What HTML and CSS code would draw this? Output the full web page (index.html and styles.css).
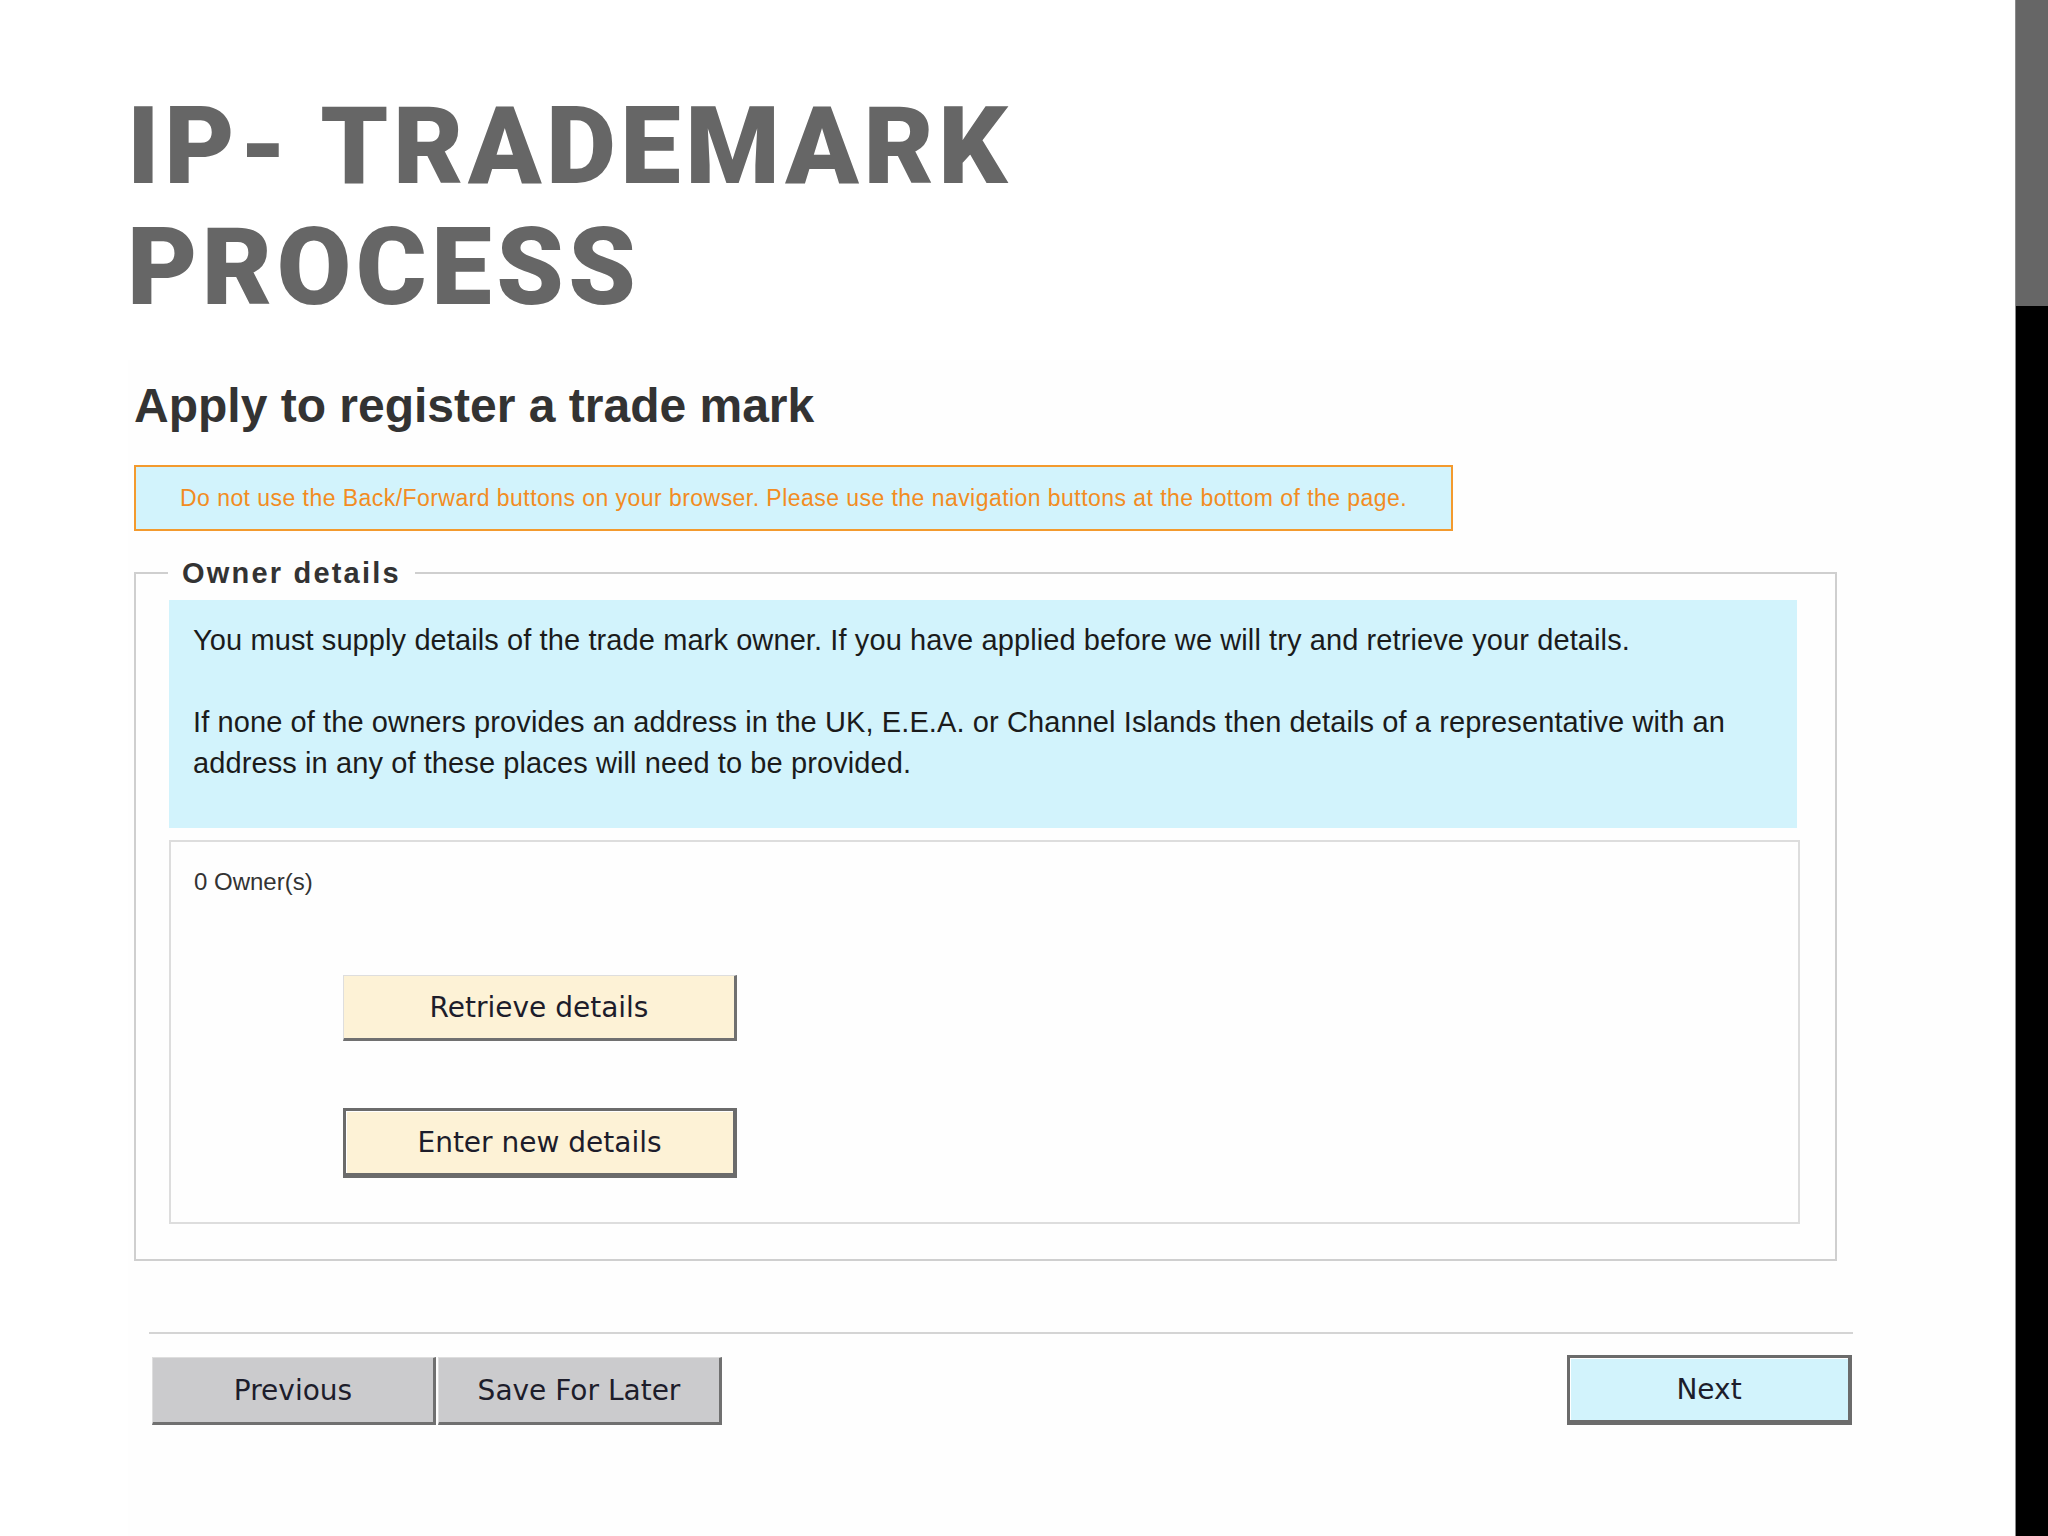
FILE: index.html
```html
<!DOCTYPE html>
<html lang="en">
<head>
<meta charset="utf-8">
<title>IP- Trademark Process</title>
<link rel="stylesheet" href="styles.css">
</head>
<body>
<div class="page">
  <main class="slide">
    <h1 class="title">IP- TRADEMARK<br>PROCESS</h1>
    <section class="shot">
      <h2 class="heading">Apply to register a trade mark</h2>
      <div class="notice">Do not use the Back/Forward buttons on your browser. Please use the navigation buttons at the bottom of the page.</div>
      <fieldset class="owner">
        <legend class="owner-legend">Owner details</legend>
        <div class="info">
          <p>You must supply details of the trade mark owner. If you have applied before we will try and retrieve your details.</p>
          <p>If none of the owners provides an address in the UK, E.E.A. or Channel Islands then details of a representative with an address in any of these places will need to be provided.</p>
        </div>
        <div class="owners">
          <div class="owners-count">0 Owner(s)</div>
          <div class="owner-actions">
            <button class="btn btn-cream btn-raised" type="button">Retrieve details</button>
            <button class="btn btn-cream btn-focus btn-tall" type="button">Enter new details</button>
          </div>
        </div>
      </fieldset>
      <div class="rule"></div>
      <div class="nav">
        <div class="nav-left">
          <button class="btn btn-grey btn-raised btn-nav" type="button">Previous</button>
          <button class="btn btn-grey btn-raised btn-nav" type="button">Save For Later</button>
        </div>
        <button class="btn btn-next btn-focus btn-tall" type="button">Next</button>
      </div>
    </section>
  </main>
  <aside class="edge">
    <div class="edge-top"></div>
    <div class="edge-bottom"></div>
  </aside>
</div>
</body>
</html>
```

FILE: styles.css
```css
html, body {
  margin: 0;
  padding: 0;
}

body {
  background: #ffffff;
  font-family: "Liberation Sans", Arial, sans-serif;
  overflow: hidden;
}

.page {
  display: flex;
  width: 2048px;
  height: 1536px;
}

.slide {
  flex: 1;
  min-width: 0;
  display: flex;
  flex-direction: column;
  padding-left: 127px;
}

.title {
  margin: 86px 0 0;
  font-family: Roboto, "Liberation Sans", Arial, sans-serif;
  font-size: 108px;
  line-height: 121px;
  font-weight: 900;
  color: #666666;
  letter-spacing: 4.5px;
}

.shot {
  flex: 1;
  margin: 32px 25px 0 1px;
  padding: 18px 0 0 6px;
  background: #fefefe;
}

.heading {
  margin: 0;
  font-size: 48px;
  line-height: 56px;
  font-weight: 700;
  color: #333333;
}

.notice {
  margin-top: 31px;
  width: 1319px;
  height: 66px;
  box-sizing: border-box;
  border: 2px solid #f39a2e;
  background: #d2f3fc;
  color: #f28c22;
  font-size: 23px;
  line-height: 62px;
  letter-spacing: 0.45px;
  padding-left: 44px;
  white-space: nowrap;
}

.owner {
  margin: 26px 0 0;
  width: 1703px;
  min-width: 0;
  box-sizing: border-box;
  border: 2px solid #cfcfcf;
  padding: 0 37px 35px 32px;
}

.owner-legend {
  padding: 0 14px;
  font-size: 29px;
  line-height: 32px;
  font-weight: 700;
  color: #333333;
  letter-spacing: 2.2px;
}

.info {
  margin: 11px 0 0 1px;
  width: 1628px;
  box-sizing: border-box;
  padding: 20px 24px 44px;
  background: #d2f3fc;
  font-size: 29px;
  line-height: 41px;
  letter-spacing: 0.1px;
  color: #1b1b1b;
}

.info p {
  margin: 0;
}

.info p + p {
  margin-top: 41px;
}

.owners {
  margin: 12px 0 0 1px;
  width: 1631px;
  height: 384px;
  box-sizing: border-box;
  border: 2px solid #dddddd;
  padding: 26px 0 0 23px;
}

.owners-count {
  font-size: 24px;
  line-height: 28px;
  color: #333333;
}

.owner-actions {
  display: flex;
  flex-direction: column;
  align-items: flex-start;
  gap: 67px;
  margin: 79px 0 0 149px;
}

.btn {
  appearance: none;
  -webkit-appearance: none;
  margin: 0;
  padding: 0;
  width: 394px;
  height: 66px;
  box-sizing: border-box;
  display: flex;
  align-items: center;
  justify-content: center;
  font-family: "DejaVu Sans", Verdana, sans-serif;
  font-size: 28px;
  color: #1d1d2b;
  border-radius: 0;
  cursor: pointer;
}

.btn-cream {
  background: #fdf2d6;
}

.btn-grey {
  background: #cbcbcd;
}

.btn-next {
  background: #d2f3fc;
  width: 285px;
}

.btn-raised {
  border-style: solid;
  border-color: #dedede #707070 #707070 #dedede;
  border-width: 1px 3px 3px 1px;
}

.btn-focus {
  border: 3px solid #6b6b6b;
  border-right-width: 4px;
  border-bottom-width: 5px;
  box-shadow: inset 1px 1px 0 #ffffff;
}

.btn-tall {
  height: 70px;
}

.btn-nav {
  width: 284px;
  height: 68px;
}

.rule {
  margin: 71px 0 0 15px;
  width: 1704px;
  height: 2px;
  background: #d4d4d4;
}

.nav {
  display: flex;
  justify-content: space-between;
  align-items: flex-end;
  width: 1700px;
  margin: 21px 0 0 18px;
}

.nav-left {
  display: flex;
  gap: 2px;
}

.edge {
  width: 33px;
  display: flex;
  flex-direction: column;
  box-sizing: border-box;
  border-left: 1px solid #8a8a8a;
}

.edge-top {
  height: 306px;
  background: #666666;
}

.edge-bottom {
  flex: 1;
  background: #000000;
}
```
